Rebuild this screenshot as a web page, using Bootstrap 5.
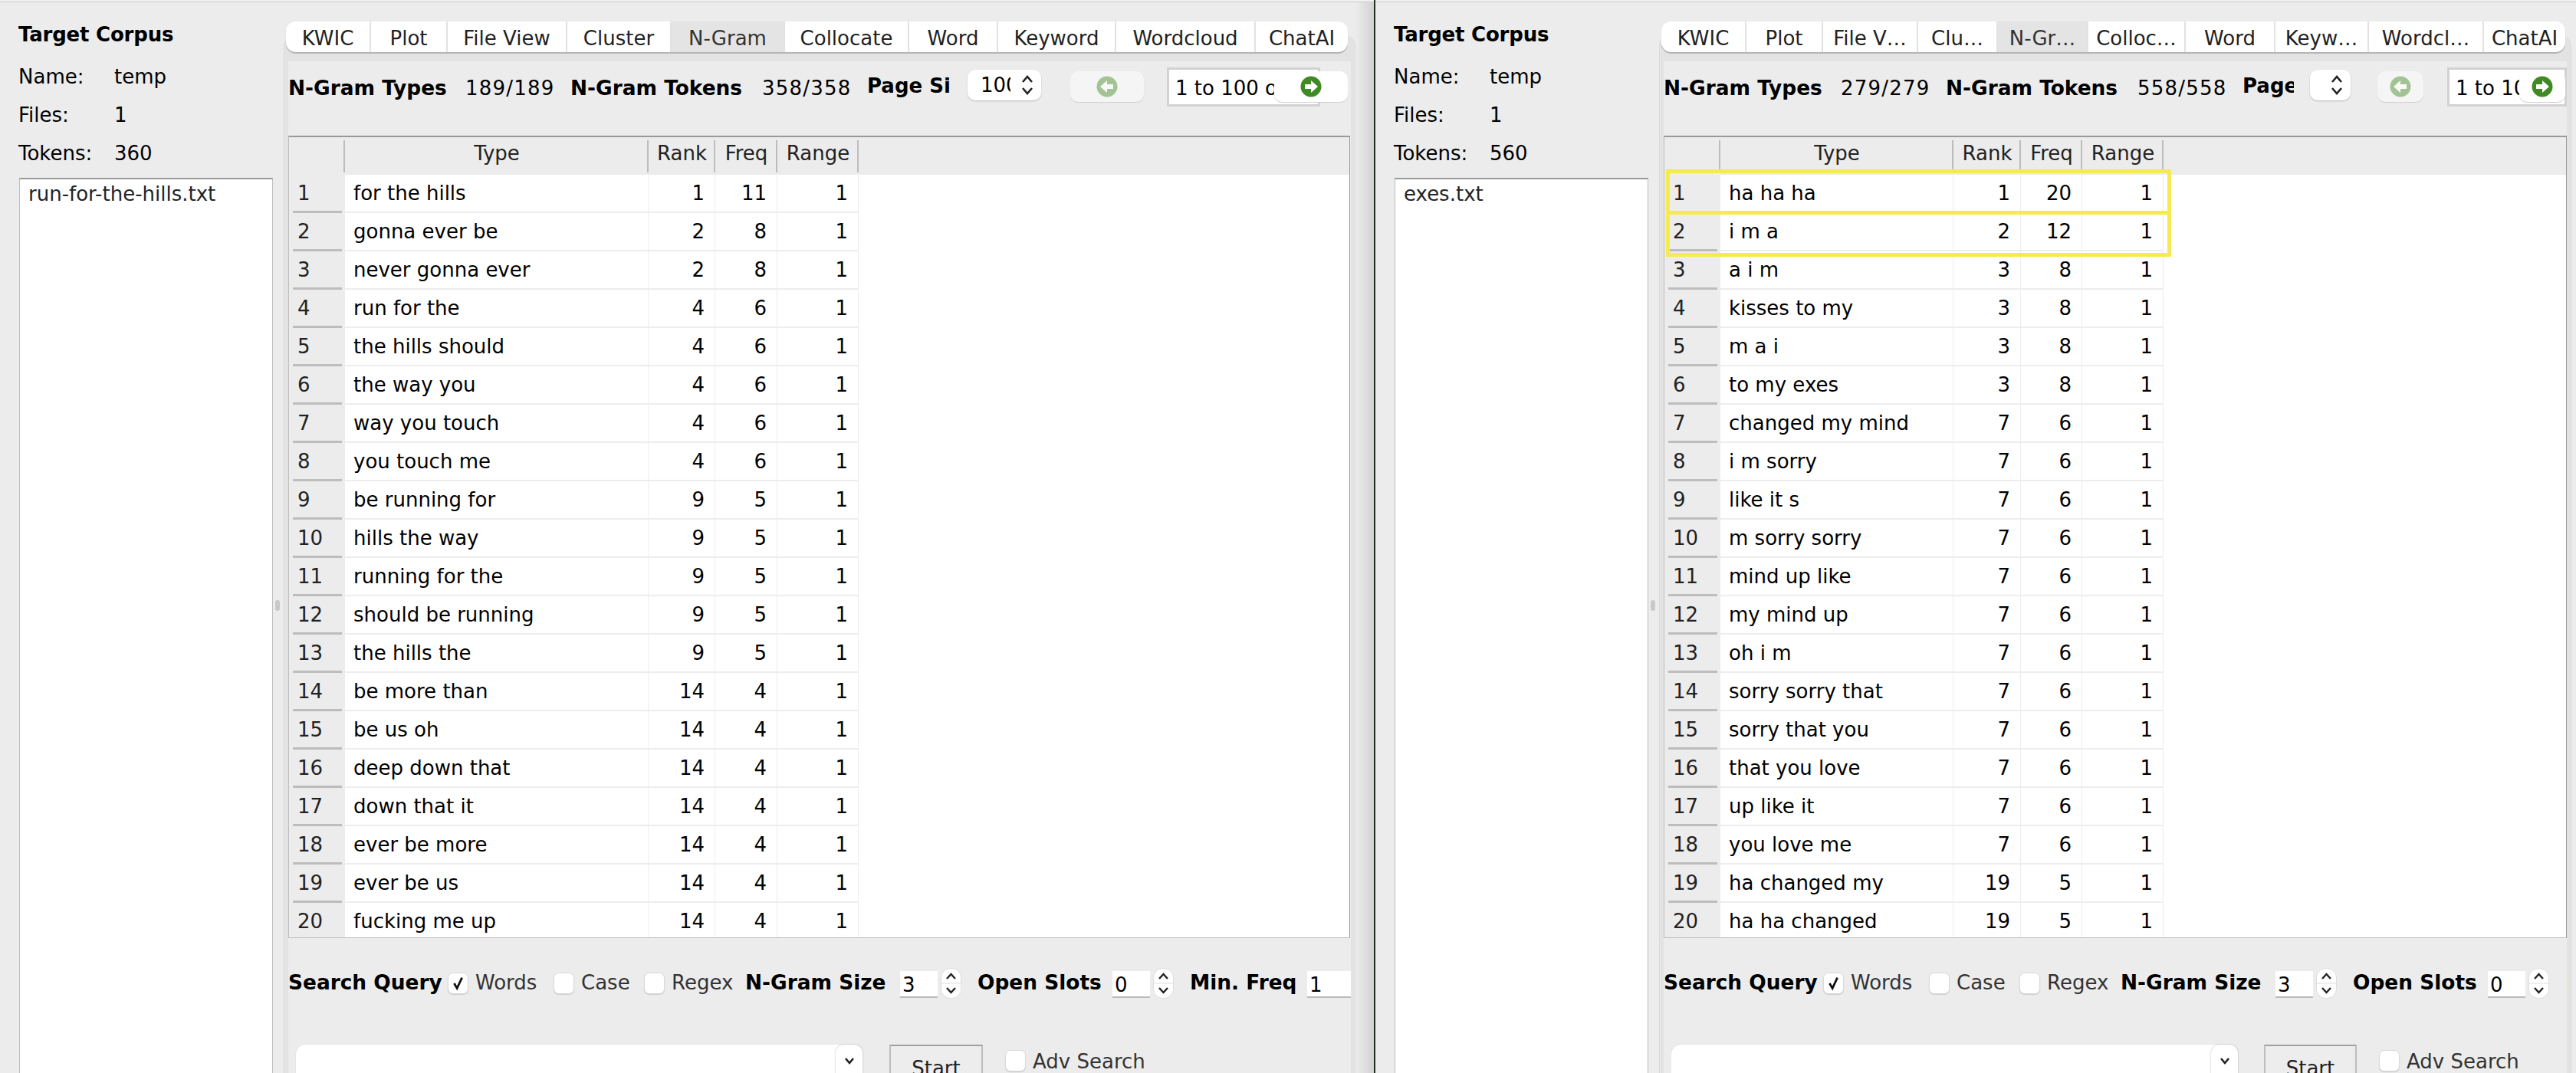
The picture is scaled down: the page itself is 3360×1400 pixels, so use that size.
<!doctype html>
<html lang="en">
<head>
<meta charset="utf-8">
<title>AntConc N-Gram comparison</title>
<link href="https://cdn.jsdelivr.net/npm/bootstrap@5.3.0/dist/css/bootstrap.min.css" rel="stylesheet">
<style>
html,body{height:100%;overflow:hidden}
body{font-family:"DejaVu Sans",sans-serif;font-size:26px;color:#000;background:#f1f1f1}
.stage{width:3360px;height:1400px;overflow:hidden}
.seam{flex:none;width:2px;background:#22301f}
.tool{flex:none;margin-top:2px;border-top:1px solid #cbcbcb;height:1398px;overflow:hidden;background:#ececec}
.tool-a{width:1792px;background:linear-gradient(to left,#d2d2d2,#ececec 24px)}
.tool-b{width:1566px}
.corpus{flex:none;width:370px;padding:25px 0 0 24px;position:relative}
.corpus-title{font-weight:700;line-height:34px;margin-bottom:13px;letter-spacing:-.2px}
.meta-row{height:50px;line-height:50px}
.meta-key{width:125px}
.files{margin:7px 0 0 1px;width:331px;height:1300px;border:1px solid #bdbdbd;border-top:2px solid #999;background:#fff;border-radius:0}
.files .list-group-item{border:0;padding:0 0 0 11px;line-height:38px;background:transparent;font-size:26px;border-radius:0}
.grip{position:absolute;left:359px;top:780px;width:6px;height:14px;border-radius:3px;background:#c9c9c9}
.work{flex:1 1 0;min-width:0}
.tabbar{margin:25px 0 0 3px;height:40px;background:#fff;border-radius:13px;box-shadow:0 2px 1px #b5b5b5;position:relative;z-index:1;overflow:hidden;flex-wrap:nowrap}
.tool-a .tabbar{width:1385px}
.tool-b .tabbar{width:1179px}
.tabbar .nav-item{flex:none;border-right:2px solid #e2e2e2}
.tabbar .nav-item:last-child{border-right:0}
.tabbar .nav-link{padding:0;color:#222;text-align:center;line-height:44px;height:40px;white-space:nowrap;overflow:hidden}
.tabbar .nav-link.active{background:#e4e4e4;color:#333}
.tool-a .nav-item:nth-child(1){width:111px}.tool-a .nav-item:nth-child(2){width:100px}.tool-a .nav-item:nth-child(3){width:156px}.tool-a .nav-item:nth-child(4){width:136px}.tool-a .nav-item:nth-child(5){width:148px}.tool-a .nav-item:nth-child(6){width:162px}.tool-a .nav-item:nth-child(7){width:116px}.tool-a .nav-item:nth-child(8){width:154px}.tool-a .nav-item:nth-child(9){width:182px}.tool-a .nav-item:nth-child(10){width:120px}
.tool-b .nav-item:nth-child(1){width:111px}.tool-b .nav-item:nth-child(2){width:100px}.tool-b .nav-item:nth-child(3){width:124px}.tool-b .nav-item:nth-child(4){width:104px}.tool-b .nav-item:nth-child(5){width:118px}.tool-b .nav-item:nth-child(6){width:127px}.tool-b .nav-item:nth-child(7){width:117px}.tool-b .nav-item:nth-child(8){width:122px}.tool-b .nav-item:nth-child(9){width:150px}.tool-b .nav-item:nth-child(10){width:106px}
.pane{margin-top:-21px;height:1400px;border:1px solid #dcdcdc;border-radius:12px 12px 0 0;background:#e3e3e3;padding:32px 5px 0 5px}
.tool-a .pane{width:1398px}
.tool-b .pane{width:1190px}
.pane-in{background:#ececec;height:1400px;overflow:hidden}
.stat-row{margin-top:8px;height:51px;white-space:nowrap}
.stat-key{font-weight:700;flex:none;padding-top:3px;font-size:26.4px}
.stat-val{flex:none;letter-spacing:1.2px;padding-top:4px}
.w-a{width:231px}.w-b{width:137px}.w-c{width:250px}
.page-key{flex:none;font-weight:700;overflow:hidden;margin-top:-3px}
.tool-a .page-key{width:108px;margin-right:23px}
.tool-b .page-key{width:67px;margin-right:21px}
.combo{flex:none;height:40px;margin-top:-5px;background:#fff;border-radius:10px;box-shadow:0 1px 2px #b9b9b9;padding:0 10px 0 17px}
.tool-a .combo{width:96px}.tool-b .combo{width:53px}
.combo-val{width:39px;overflow:hidden;flex:none}
.pager{flex:none;height:40px;border-radius:10px;background:#fff;box-shadow:0 1px 1px #cfcfcf;padding:0;border:0;margin-top:-1px;position:relative}
.pager:disabled{background:#f5f5f5;opacity:1}
.pager:disabled svg{opacity:.45}
.tool-a .pager{width:96px}.tool-b .pager{width:60px}
.tool-a .pager-back{margin-left:38px}.tool-b .pager-back{margin-left:35px}
.range-box{flex:none;height:51px;line-height:48px;border:3px solid #d2d2d2;background:#fff;padding-left:8px;overflow:hidden}
.tool-a .range-box{width:200px;margin-left:30px}.tool-b .range-box{width:156px;margin-left:31px}
.tool-a .pager-next{margin-left:-60px}.tool-b .pager-next{margin-left:-62px}
.grid-wrap{margin-top:38px;height:1047px;border:1px solid #bdbdbd;border-top:2px solid #999;border-right-color:#999;background:#fff;overflow:hidden;position:relative}
.tool-a .grid-wrap{width:1385px}.tool-b .grid-wrap{width:1178px}
.grid{table-layout:fixed;width:100%;margin:0;border-collapse:separate;border-spacing:0;--bs-table-bg:transparent}
.grid th,.grid td{padding:0;border:0;box-shadow:none;font-weight:400;white-space:nowrap;overflow:hidden;color:#000}
.grid thead th{height:49px;padding-bottom:6px;vertical-align:middle;background:#ececec;text-align:center;color:#222;background-image:linear-gradient(#bcbcbc,#bcbcbc);background-repeat:no-repeat;background-size:2px 42px;background-position:right 4px}
.grid thead th.fill{background-image:none}
.grid tbody td{height:50px;line-height:48px;border-right:1px solid #ededed;border-bottom:2px solid #ededed;background:#fff}
.grid tbody td.fill{border:0}
.grid tbody tr:first-child td{height:49px}
.grid td.cell-type{padding-left:11px}
.grid td.cell-num{text-align:right;padding-right:13px}
.grid td.cell-row{background:#ececec linear-gradient(#bdbdbd,#bdbdbd) no-repeat 5px bottom/64px 3px;border:0;padding-left:11px;color:#222}
.c0{width:73px}.tool-a .c1{width:396px}.tool-b .c1{width:304px}
.tool-a .c2{width:87px}.tool-b .c2{width:88px}
.tool-a .c3{width:81px}.tool-b .c3{width:80px}
.tool-a .c4{width:106px}.tool-b .c4{width:106px}
.hit{position:absolute;left:2px;width:659px;border:5px solid #f5eb4e;pointer-events:none}
.hit-1{top:42px;height:59px}.hit-2{top:96px;height:60px}
.query-row{margin-top:39px;height:40px;white-space:nowrap}
.q-key{flex:none;font-weight:700;font-size:26.4px;padding-bottom:2px}
.q-w0{width:208px}.q-w1{width:202px}.q-w2{width:176px;margin-left:21px}.q-w3{width:153px;margin-left:21px}
.tick.form-check-input,.tick-adv.form-check-input{flex:none;width:27px;height:28px;margin:0;background-color:#fff;border:1px solid #dadada;border-radius:7px;box-shadow:0 1px 1px #ccc}
.tick.form-check-input:checked{background-color:#fff;border-color:#dadada;background-image:url("data:image/svg+xml,%3csvg xmlns='http://www.w3.org/2000/svg' viewBox='0 0 27 28'%3e%3cpath d='M8 14l4 7 7-15' fill='none' stroke='%23111' stroke-width='3'/%3e%3c/svg%3e");background-size:100% 100%}
.tick-label{flex:none;margin:0 0 0 9px;color:#333;padding-bottom:2px}
.t1{width:93px}.t2{width:73px}.t3{width:87px}
.query-row .t1{width:93px;margin-right:9px}.query-row .t2{width:73px;margin-right:9px}.query-row .t3{width:87px;margin-right:9px}
.num-box{flex:none;height:35px;margin-top:3px;width:49px;background:#fff;border-bottom:2px solid #bbb;line-height:36px;padding-left:3px;overflow:hidden}
.num-box-end{width:57px}
.spin{flex:none;width:27px;height:40px;margin-left:4px;display:block}
.search-row{margin-top:60px;height:60px}
.search-box{flex:none;margin-left:10px;height:60px;background:#fff;border-radius:12px 12px 0 0;box-shadow:0 0 1px #bbb}
.tool-a .search-box,.tool-b .search-box{width:739px}
.search-drop{margin-left:auto;width:35px;height:60px;background:#fff;border-radius:11px;box-shadow:0 0 2px #aaa}
.start-btn{flex:none;margin-left:35px;width:122px;height:60px;padding:2px 0 0;border:2px solid #bdbdbd;border-top-color:#a0a0a0;border-radius:0;background:#ededed;color:#222;font-size:26px;line-height:38px}
.tool-b .start-btn{margin-left:34px;width:121px}
.tick-adv.form-check-input.adv{margin:7px 0 0 29px}
.adv-label{line-height:40px;margin-top:2px}
</style>
</head>
<body>
<div class="stage d-flex">

<section class="tool tool-a d-flex">
  <aside class="corpus">
    <div class="corpus-title">Target Corpus</div>
    <div class="meta-row d-flex"><span class="meta-key">Name:</span><span>temp</span></div>
    <div class="meta-row d-flex"><span class="meta-key">Files:</span><span>1</span></div>
    <div class="meta-row d-flex"><span class="meta-key">Tokens:</span><span>360</span></div>
    <ul class="list-group files"><li class="list-group-item">run-for-the-hills.txt</li></ul>
    <span class="grip"></span>
  </aside>
  <div class="work">
    <ul class="nav tabbar">
      <li class="nav-item"><a class="nav-link" href="#">KWIC</a></li>
      <li class="nav-item"><a class="nav-link" href="#">Plot</a></li>
      <li class="nav-item"><a class="nav-link" href="#">File View</a></li>
      <li class="nav-item"><a class="nav-link" href="#">Cluster</a></li>
      <li class="nav-item"><a class="nav-link active" href="#">N-Gram</a></li>
      <li class="nav-item"><a class="nav-link" href="#">Collocate</a></li>
      <li class="nav-item"><a class="nav-link" href="#">Word</a></li>
      <li class="nav-item"><a class="nav-link" href="#">Keyword</a></li>
      <li class="nav-item"><a class="nav-link" href="#">Wordcloud</a></li>
      <li class="nav-item"><a class="nav-link" href="#">ChatAI</a></li>
    </ul>
    <div class="pane">
      <div class="pane-in">
        <div class="stat-row d-flex align-items-center">
          <span class="stat-key w-a">N-Gram Types</span><span class="stat-val w-b">189/189</span>
          <span class="stat-key w-c">N-Gram Tokens</span><span class="stat-val w-b">358/358</span>
          <span class="page-key">Page Size</span>
          <div class="combo d-flex align-items-center justify-content-between"><span class="combo-val">100</span><svg width="16" height="28" viewBox="0 0 16 28"><path d="M2 10l6-7 6 7M2 18l6 7 6-7" fill="none" stroke="#222" stroke-width="2.6"/></svg></div>
          <button class="pager pager-back btn" disabled aria-label="Previous"><svg width="28" height="28" viewBox="0 0 28 28"><circle cx="14" cy="14" r="13.5" fill="#3f8a22"/><path d="M22 11v6h-8v5l-9-8 9-8v5z" fill="#fff"/></svg></button>
          <div class="range-box">1 to 100 of 189</div>
          <button class="pager pager-next btn" aria-label="Next"><svg width="28" height="28" viewBox="0 0 28 28"><circle cx="14" cy="14" r="13.5" fill="#3f8a22"/><path d="M6 11v6h8v5l9-8-9-8v5z" fill="#fff"/></svg></button>
        </div>
        <div class="grid-wrap">
          <table class="table grid">
            <colgroup><col class="c0"><col class="c1"><col class="c2"><col class="c3"><col class="c4"><col></colgroup>
            <thead><tr><th></th><th>Type</th><th>Rank</th><th>Freq</th><th>Range</th><th class="fill"></th></tr></thead>
            <tbody>
              <tr><td class="cell-row">1</td><td class="cell-type">for the hills</td><td class="cell-num">1</td><td class="cell-num">11</td><td class="cell-num">1</td><td class="fill"></td></tr>
              <tr><td class="cell-row">2</td><td class="cell-type">gonna ever be</td><td class="cell-num">2</td><td class="cell-num">8</td><td class="cell-num">1</td><td class="fill"></td></tr>
              <tr><td class="cell-row">3</td><td class="cell-type">never gonna ever</td><td class="cell-num">2</td><td class="cell-num">8</td><td class="cell-num">1</td><td class="fill"></td></tr>
              <tr><td class="cell-row">4</td><td class="cell-type">run for the</td><td class="cell-num">4</td><td class="cell-num">6</td><td class="cell-num">1</td><td class="fill"></td></tr>
              <tr><td class="cell-row">5</td><td class="cell-type">the hills should</td><td class="cell-num">4</td><td class="cell-num">6</td><td class="cell-num">1</td><td class="fill"></td></tr>
              <tr><td class="cell-row">6</td><td class="cell-type">the way you</td><td class="cell-num">4</td><td class="cell-num">6</td><td class="cell-num">1</td><td class="fill"></td></tr>
              <tr><td class="cell-row">7</td><td class="cell-type">way you touch</td><td class="cell-num">4</td><td class="cell-num">6</td><td class="cell-num">1</td><td class="fill"></td></tr>
              <tr><td class="cell-row">8</td><td class="cell-type">you touch me</td><td class="cell-num">4</td><td class="cell-num">6</td><td class="cell-num">1</td><td class="fill"></td></tr>
              <tr><td class="cell-row">9</td><td class="cell-type">be running for</td><td class="cell-num">9</td><td class="cell-num">5</td><td class="cell-num">1</td><td class="fill"></td></tr>
              <tr><td class="cell-row">10</td><td class="cell-type">hills the way</td><td class="cell-num">9</td><td class="cell-num">5</td><td class="cell-num">1</td><td class="fill"></td></tr>
              <tr><td class="cell-row">11</td><td class="cell-type">running for the</td><td class="cell-num">9</td><td class="cell-num">5</td><td class="cell-num">1</td><td class="fill"></td></tr>
              <tr><td class="cell-row">12</td><td class="cell-type">should be running</td><td class="cell-num">9</td><td class="cell-num">5</td><td class="cell-num">1</td><td class="fill"></td></tr>
              <tr><td class="cell-row">13</td><td class="cell-type">the hills the</td><td class="cell-num">9</td><td class="cell-num">5</td><td class="cell-num">1</td><td class="fill"></td></tr>
              <tr><td class="cell-row">14</td><td class="cell-type">be more than</td><td class="cell-num">14</td><td class="cell-num">4</td><td class="cell-num">1</td><td class="fill"></td></tr>
              <tr><td class="cell-row">15</td><td class="cell-type">be us oh</td><td class="cell-num">14</td><td class="cell-num">4</td><td class="cell-num">1</td><td class="fill"></td></tr>
              <tr><td class="cell-row">16</td><td class="cell-type">deep down that</td><td class="cell-num">14</td><td class="cell-num">4</td><td class="cell-num">1</td><td class="fill"></td></tr>
              <tr><td class="cell-row">17</td><td class="cell-type">down that it</td><td class="cell-num">14</td><td class="cell-num">4</td><td class="cell-num">1</td><td class="fill"></td></tr>
              <tr><td class="cell-row">18</td><td class="cell-type">ever be more</td><td class="cell-num">14</td><td class="cell-num">4</td><td class="cell-num">1</td><td class="fill"></td></tr>
              <tr><td class="cell-row">19</td><td class="cell-type">ever be us</td><td class="cell-num">14</td><td class="cell-num">4</td><td class="cell-num">1</td><td class="fill"></td></tr>
              <tr><td class="cell-row">20</td><td class="cell-type">fucking me up</td><td class="cell-num">14</td><td class="cell-num">4</td><td class="cell-num">1</td><td class="fill"></td></tr>
            </tbody>
          </table>
        </div>
        <div class="query-row d-flex align-items-center">
          <span class="q-key q-w0">Search Query</span>
          <input class="form-check-input tick" type="checkbox" checked aria-label="Words"><span class="tick-label t1">Words</span>
          <input class="form-check-input tick" type="checkbox" aria-label="Case"><span class="tick-label t2">Case</span>
          <input class="form-check-input tick" type="checkbox" aria-label="Regex"><span class="tick-label t3">Regex</span>
          <span class="q-key q-w1">N-Gram Size</span>
          <div class="num-box">3</div>
          <svg class="spin" viewBox="0 0 27 40"><rect x=".5" y=".5" width="26" height="39" rx="12" fill="#fff" stroke="#ddd"/><path d="M1 20h25" stroke="#ddd"/><path d="M8 14l5.500-6 5.500 6M8 26l5.500 6 5.500-6" fill="none" stroke="#222" stroke-width="2.400"/></svg>
          <span class="q-key q-w2">Open Slots</span>
          <div class="num-box">0</div>
          <svg class="spin" viewBox="0 0 27 40"><rect x=".5" y=".5" width="26" height="39" rx="12" fill="#fff" stroke="#ddd"/><path d="M1 20h25" stroke="#ddd"/><path d="M8 14l5.500-6 5.500 6M8 26l5.500 6 5.500-6" fill="none" stroke="#222" stroke-width="2.400"/></svg>
          <span class="q-key q-w3">Min. Freq</span>
          <div class="num-box num-box-end">1</div>
        </div>
        <div class="search-row d-flex">
          <div class="search-box d-flex"><span class="search-drop d-flex justify-content-center"><svg width="14" height="40" viewBox="0 0 14 40"><path d="M2 18l5 6 5-6" fill="none" stroke="#222" stroke-width="2.600"/></svg></span></div>
          <button class="btn start-btn" type="button">Start</button>
          <input class="form-check-input tick-adv adv" type="checkbox" aria-label="Adv Search"><span class="tick-label adv-label">Adv Search</span>
        </div>
      </div>
    </div>
  </div>
</section>

<div class="seam"></div>

<section class="tool tool-b d-flex">
  <aside class="corpus">
    <div class="corpus-title">Target Corpus</div>
    <div class="meta-row d-flex"><span class="meta-key">Name:</span><span>temp</span></div>
    <div class="meta-row d-flex"><span class="meta-key">Files:</span><span>1</span></div>
    <div class="meta-row d-flex"><span class="meta-key">Tokens:</span><span>560</span></div>
    <ul class="list-group files"><li class="list-group-item">exes.txt</li></ul>
    <span class="grip"></span>
  </aside>
  <div class="work">
    <ul class="nav tabbar">
      <li class="nav-item"><a class="nav-link" href="#">KWIC</a></li>
      <li class="nav-item"><a class="nav-link" href="#">Plot</a></li>
      <li class="nav-item"><a class="nav-link" href="#">File V…</a></li>
      <li class="nav-item"><a class="nav-link" href="#">Clu…</a></li>
      <li class="nav-item"><a class="nav-link active" href="#">N-Gr…</a></li>
      <li class="nav-item"><a class="nav-link" href="#">Colloc…</a></li>
      <li class="nav-item"><a class="nav-link" href="#">Word</a></li>
      <li class="nav-item"><a class="nav-link" href="#">Keyw…</a></li>
      <li class="nav-item"><a class="nav-link" href="#">Wordcl…</a></li>
      <li class="nav-item"><a class="nav-link" href="#">ChatAI</a></li>
    </ul>
    <div class="pane">
      <div class="pane-in">
        <div class="stat-row d-flex align-items-center">
          <span class="stat-key w-a">N-Gram Types</span><span class="stat-val w-b">279/279</span>
          <span class="stat-key w-c">N-Gram Tokens</span><span class="stat-val w-b">558/558</span>
          <span class="page-key">Page Size</span>
          <div class="combo d-flex align-items-center justify-content-end"><svg width="16" height="28" viewBox="0 0 16 28"><path d="M2 10l6-7 6 7M2 18l6 7 6-7" fill="none" stroke="#222" stroke-width="2.600"/></svg></div>
          <button class="pager pager-back btn" disabled aria-label="Previous"><svg width="28" height="28" viewBox="0 0 28 28"><circle cx="14" cy="14" r="13.5" fill="#3f8a22"/><path d="M22 11v6h-8v5l-9-8 9-8v5z" fill="#fff"/></svg></button>
          <div class="range-box">1 to 100 of 279</div>
          <button class="pager pager-next btn" aria-label="Next"><svg width="28" height="28" viewBox="0 0 28 28"><circle cx="14" cy="14" r="13.5" fill="#3f8a22"/><path d="M6 11v6h8v5l9-8-9-8v5z" fill="#fff"/></svg></button>
        </div>
        <div class="grid-wrap">
          <table class="table grid">
            <colgroup><col class="c0"><col class="c1"><col class="c2"><col class="c3"><col class="c4"><col></colgroup>
            <thead><tr><th></th><th>Type</th><th>Rank</th><th>Freq</th><th>Range</th><th class="fill"></th></tr></thead>
            <tbody>
              <tr><td class="cell-row">1</td><td class="cell-type">ha ha ha</td><td class="cell-num">1</td><td class="cell-num">20</td><td class="cell-num">1</td><td class="fill"></td></tr>
              <tr><td class="cell-row">2</td><td class="cell-type">i m a</td><td class="cell-num">2</td><td class="cell-num">12</td><td class="cell-num">1</td><td class="fill"></td></tr>
              <tr><td class="cell-row">3</td><td class="cell-type">a i m</td><td class="cell-num">3</td><td class="cell-num">8</td><td class="cell-num">1</td><td class="fill"></td></tr>
              <tr><td class="cell-row">4</td><td class="cell-type">kisses to my</td><td class="cell-num">3</td><td class="cell-num">8</td><td class="cell-num">1</td><td class="fill"></td></tr>
              <tr><td class="cell-row">5</td><td class="cell-type">m a i</td><td class="cell-num">3</td><td class="cell-num">8</td><td class="cell-num">1</td><td class="fill"></td></tr>
              <tr><td class="cell-row">6</td><td class="cell-type">to my exes</td><td class="cell-num">3</td><td class="cell-num">8</td><td class="cell-num">1</td><td class="fill"></td></tr>
              <tr><td class="cell-row">7</td><td class="cell-type">changed my mind</td><td class="cell-num">7</td><td class="cell-num">6</td><td class="cell-num">1</td><td class="fill"></td></tr>
              <tr><td class="cell-row">8</td><td class="cell-type">i m sorry</td><td class="cell-num">7</td><td class="cell-num">6</td><td class="cell-num">1</td><td class="fill"></td></tr>
              <tr><td class="cell-row">9</td><td class="cell-type">like it s</td><td class="cell-num">7</td><td class="cell-num">6</td><td class="cell-num">1</td><td class="fill"></td></tr>
              <tr><td class="cell-row">10</td><td class="cell-type">m sorry sorry</td><td class="cell-num">7</td><td class="cell-num">6</td><td class="cell-num">1</td><td class="fill"></td></tr>
              <tr><td class="cell-row">11</td><td class="cell-type">mind up like</td><td class="cell-num">7</td><td class="cell-num">6</td><td class="cell-num">1</td><td class="fill"></td></tr>
              <tr><td class="cell-row">12</td><td class="cell-type">my mind up</td><td class="cell-num">7</td><td class="cell-num">6</td><td class="cell-num">1</td><td class="fill"></td></tr>
              <tr><td class="cell-row">13</td><td class="cell-type">oh i m</td><td class="cell-num">7</td><td class="cell-num">6</td><td class="cell-num">1</td><td class="fill"></td></tr>
              <tr><td class="cell-row">14</td><td class="cell-type">sorry sorry that</td><td class="cell-num">7</td><td class="cell-num">6</td><td class="cell-num">1</td><td class="fill"></td></tr>
              <tr><td class="cell-row">15</td><td class="cell-type">sorry that you</td><td class="cell-num">7</td><td class="cell-num">6</td><td class="cell-num">1</td><td class="fill"></td></tr>
              <tr><td class="cell-row">16</td><td class="cell-type">that you love</td><td class="cell-num">7</td><td class="cell-num">6</td><td class="cell-num">1</td><td class="fill"></td></tr>
              <tr><td class="cell-row">17</td><td class="cell-type">up like it</td><td class="cell-num">7</td><td class="cell-num">6</td><td class="cell-num">1</td><td class="fill"></td></tr>
              <tr><td class="cell-row">18</td><td class="cell-type">you love me</td><td class="cell-num">7</td><td class="cell-num">6</td><td class="cell-num">1</td><td class="fill"></td></tr>
              <tr><td class="cell-row">19</td><td class="cell-type">ha changed my</td><td class="cell-num">19</td><td class="cell-num">5</td><td class="cell-num">1</td><td class="fill"></td></tr>
              <tr><td class="cell-row">20</td><td class="cell-type">ha ha changed</td><td class="cell-num">19</td><td class="cell-num">5</td><td class="cell-num">1</td><td class="fill"></td></tr>
            </tbody>
          </table>
          <div class="hit hit-1"></div>
          <div class="hit hit-2"></div>
        </div>
        <div class="query-row d-flex align-items-center">
          <span class="q-key q-w0">Search Query</span>
          <input class="form-check-input tick" type="checkbox" checked aria-label="Words"><span class="tick-label t1">Words</span>
          <input class="form-check-input tick" type="checkbox" aria-label="Case"><span class="tick-label t2">Case</span>
          <input class="form-check-input tick" type="checkbox" aria-label="Regex"><span class="tick-label t3">Regex</span>
          <span class="q-key q-w1">N-Gram Size</span>
          <div class="num-box">3</div>
          <svg class="spin" viewBox="0 0 27 40"><rect x=".5" y=".5" width="26" height="39" rx="12" fill="#fff" stroke="#ddd"/><path d="M1 20h25" stroke="#ddd"/><path d="M8 14l5.500-6 5.500 6M8 26l5.500 6 5.500-6" fill="none" stroke="#222" stroke-width="2.400"/></svg>
          <span class="q-key q-w2">Open Slots</span>
          <div class="num-box">0</div>
          <svg class="spin" viewBox="0 0 27 40"><rect x=".5" y=".5" width="26" height="39" rx="12" fill="#fff" stroke="#ddd"/><path d="M1 20h25" stroke="#ddd"/><path d="M8 14l5.500-6 5.500 6M8 26l5.500 6 5.500-6" fill="none" stroke="#222" stroke-width="2.400"/></svg>
          <span class="q-key q-w3">Min. Freq</span>
        </div>
        <div class="search-row d-flex">
          <div class="search-box d-flex"><span class="search-drop d-flex justify-content-center"><svg width="14" height="40" viewBox="0 0 14 40"><path d="M2 18l5 6 5-6" fill="none" stroke="#222" stroke-width="2.600"/></svg></span></div>
          <button class="btn start-btn" type="button">Start</button>
          <input class="form-check-input tick-adv adv" type="checkbox" aria-label="Adv Search"><span class="tick-label adv-label">Adv Search</span>
        </div>
      </div>
    </div>
  </div>
</section>

</div>
</body>
</html>
